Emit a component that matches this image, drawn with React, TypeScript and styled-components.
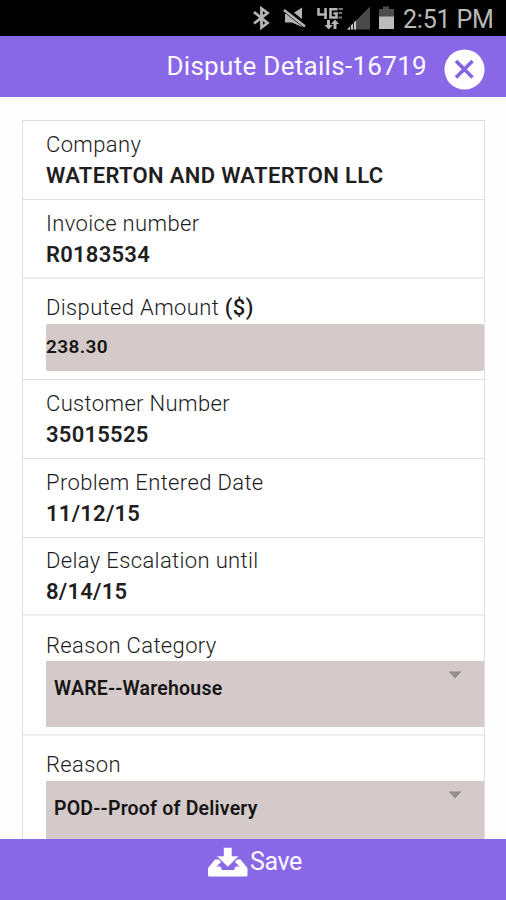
import React from 'react';
import styled, { createGlobalStyle } from 'styled-components';

const GlobalStyle = createGlobalStyle`
  * { box-sizing: border-box; }
  body { margin: 0; background: #fff; font-family: Roboto, sans-serif; overflow: hidden; }
`;

const Screen = styled.div`
  display: flex;
  flex-direction: column;
  width: 506px;
  height: 900px;
  overflow: hidden;
  background: #fefefe;
`;

const StatusBar = styled.div`
  display: flex;
  flex: none;
  justify-content: flex-end;
  height: 36px;
  padding-right: 12px;
  background: #000;
`;

const StatusIcons = styled.svg`
  flex: none;
  width: 153px;
  height: 36px;
`;

const Clock = styled.span`
  width: 91px;
  font-size: 25px;
  line-height: 39px;
  letter-spacing: -0.2px;
  white-space: nowrap;
  color: #b9b9b9;
`;

const Header = styled.header`
  display: flex;
  flex: none;
  align-items: center;
  justify-content: flex-end;
  gap: 17px;
  height: 61px;
  padding-right: 21px;
  background: #8968e8;
`;

const Title = styled.h1`
  margin: 0;
  font-size: 26px;
  font-weight: 400;
  line-height: 61px;
  letter-spacing: 0.3px;
  white-space: nowrap;
  color: #fbf8ff;
`;

const CloseButton = styled.button`
  width: 41px;
  height: 41px;
  margin-top: 5px;
  padding: 0;
  border: 0;
  background: none;

  svg { display: block; }
`;

const Content = styled.main`
  flex: 1;
  min-height: 0;
  overflow: hidden;
  padding: 23px 21px 0 22px;
`;

const Panel = styled.div`
  border: 1px solid #dedede;
  border-width: 1px 1px 0;
  background: #fff;
`;

const Row = styled.div<{ $height: number; $top?: number; $thick?: boolean }>`
  height: ${(p) => p.$height}px;
  padding: ${(p) => p.$top ?? 8}px 0 0 23px;
  border-bottom: ${(p) => (p.$thick ? '2px solid #eeeeee' : '1px solid #dfdfdf')};
`;

const Label = styled.div<{ $height?: number }>`
  height: ${(p) => p.$height ?? 31}px;
  font-size: 22px;
  font-weight: 300;
  line-height: 31px;
  letter-spacing: 0.36px;
  color: #1c1c1c;

  b { font-weight: 500; }
`;

const Value = styled.div<{ $spacing?: number }>`
  font-size: 22px;
  font-weight: 600;
  line-height: 31px;
  letter-spacing: ${(p) => p.$spacing ?? 0.25}px;
  white-space: nowrap;
  color: #1f1f1f;
`;

const Field = styled.div<{ $select?: boolean }>`
  display: flex;
  justify-content: space-between;
  height: ${(p) => (p.$select ? 66 : 47)}px;
  padding-left: ${(p) => (p.$select ? 8 : 0)}px;
  padding-right: 22px;
  border-radius: ${(p) => (p.$select ? 0 : 2)}px;
  background: #d3cac9;
  font-size: ${(p) => (p.$select ? 19.5 : 19)}px;
  font-weight: 600;
  line-height: ${(p) => (p.$select ? 56 : 45)}px;
  letter-spacing: ${(p) => (p.$select ? 0.2 : 0.4)}px;
  color: #171515;
`;

const Caret = styled.svg`
  width: 14px;
  height: 8px;
  margin-top: 10px;
`;

const SaveBar = styled.button`
  display: flex;
  flex: none;
  justify-content: center;
  gap: 2px;
  height: 61px;
  padding: 0 0 0 3px;
  border: 0;
  background: #8968e8;
  color: #fbf8ff;
  font-family: inherit;
  font-size: 25px;
  line-height: 45px;
  letter-spacing: -0.4px;

  svg { margin-top: 8px; }
`;

type Detail = {
  label: string;
  value: string;
  height: number;
  top?: number;
  spacing?: number;
  thick?: boolean;
};

const details: Detail[] = [
  { label: 'Company', value: 'WATERTON AND WATERTON LLC', height: 79, spacing: 0.33 },
  { label: 'Invoice number', value: 'R0183534', height: 79, thick: true },
];

const dates: Detail[] = [
  { label: 'Customer Number', value: '35015525', height: 79 },
  { label: 'Problem Entered Date', value: '11/12/15', height: 79 },
  { label: 'Delay Escalation until', value: '8/14/15', height: 78, top: 7, thick: true },
];

const selects = [
  { label: 'Reason Category', value: 'WARE--Warehouse' },
  { label: 'Reason', value: 'POD--Proof of Delivery' },
];

const DetailRow = ({ label, value, height, top, spacing, thick }: Detail) => (
  <Row $height={height} $top={top} $thick={thick}>
    <Label>{label}</Label>
    <Value $spacing={spacing}>{value}</Value>
  </Row>
);

export default function App() {
  return (
    <Screen>
      <GlobalStyle />
      <StatusBar>
        <StatusIcons viewBox="250 0 153 36">
          <path d="M254 12 L267.500 23 L261.500 27.500 V8.500 L267.500 13 L254 23.500" fill="none" stroke="#b5b5b5" strokeWidth="2.8" />
          <path d="M285 14 H292 L302 7.500 V27 L292 22.500 H285Z" fill="#b5b5b5" />
          <path d="M284 8.500 L306 26" stroke="#000" strokeWidth="6" />
          <path d="M284 10 L305 26.500" stroke="#b5b5b5" strokeWidth="2.600" />
          <g fill="none" stroke="#b5b5b5" strokeWidth="2.6">
            <path d="M318.500 8 V14.500 H327 M325.500 8 V19" />
            <path d="M337.500 9.300 H330.500 V17.500 H336.500 V13.500 H333.500" />
          </g>
          <path d="M338.500 9 H343 M338.500 13 H342 M338.500 17.500 H342" stroke="#777" strokeWidth="1.800" />
          <path d="M327 20 H330 V25 H333 L328.500 29.500 L324.500 25 H327Z M333.500 29 V24 H331 L335 19.500 L339 24 H336.500 V29Z" fill="#b5b5b5" />
          <path d="M347 29.500 L370 6.500 V29.500Z" fill="#4a4a4a" />
          <path d="M347 29.500 L356 20.500 V29.500Z" fill="#c8c8c8" />
          <path d="M350.500 24 V30 M353.500 21 V30" stroke="#222" strokeWidth="1" />
          <path d="M379 9 H383 V6.500 H389 V9 H394 V17 H379Z" fill="#4d4d4d" />
          <rect x="379" y="16.500" width="15" height="12.500" fill="#bcbcbc" />
        </StatusIcons>
        <Clock>2:51 PM</Clock>
      </StatusBar>
      <Header>
        <Title>Dispute Details-16719</Title>
        <CloseButton aria-label="Close">
          <svg width="41" height="41" viewBox="0 0 41 41">
            <circle cx="20.500" cy="20.500" r="20" fill="#fff" />
            <path d="M12 12 L28.500 28.500 M28.500 12 L12 28.500" stroke="#8464e2" strokeWidth="3.600" />
          </svg>
        </CloseButton>
      </Header>
      <Content>
        <Panel>
          {details.map((d) => <DetailRow key={d.label} {...d} />)}
          <Row $height={101} $top={13}>
            <Label $height={32}>Disputed Amount <b>($)</b></Label>
            <Field>238.30</Field>
          </Row>
          {dates.map((d) => <DetailRow key={d.label} {...d} />)}
          {selects.map((s, i) => (
            <Row key={s.label} $height={120} $top={14 - i} $thick>
              <Label $height={31 + i}>{s.label}</Label>
              <Field $select>
                {s.value}
                <Caret viewBox="0 0 14 8"><path d="M0.500 0.500 H13.500 L7 7.500Z" fill="#958e8e" /></Caret>
              </Field>
            </Row>
          ))}
        </Panel>
      </Content>
      <SaveBar>
        <svg width="41" height="31" viewBox="0 0 41 31">
          <path d="M8 12.500 H12 L14 15 L9.500 19.500 H13.500 L15 23 H27 L28.500 19.500 H32.500 L28 15 L30 12.500 H33.500 L40.500 21 V28 Q40.500 29.500 39 29.500 H2.500 Q1 29.500 1 28 V21Z" fill="#fff" />
          <path d="M16.500 0.500 H25 V9 H32 L20.800 20 L9.500 9 H16.500Z" fill="#fff" stroke="#8968e8" strokeWidth="0.600" />
        </svg>
        Save
      </SaveBar>
    </Screen>
  );
}
